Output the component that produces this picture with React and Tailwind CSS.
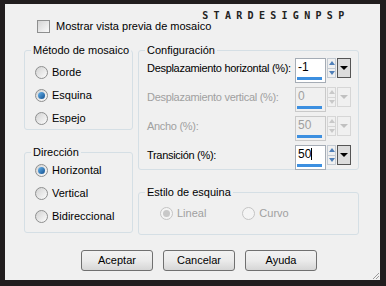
import React from 'react';

const Radio = ({ checked, disabled }) => (
  <span
    className={`relative w-[13px] h-[13px] rounded-full border flex items-center justify-center shrink-0 ${
      disabled ? 'border-[#c4c4c4] bg-[#f4f4f4]' : 'border-[#8e8f8f] bg-gradient-to-br from-[#d2d2d2] to-[#fcfcfc]'
    }`}
  >
    {checked && (
      <span
        className={`w-[7px] h-[7px] rounded-full ${
          disabled ? 'bg-[#c8c8c8]' : 'bg-gradient-to-br from-[#69b6ee] to-[#0f4f8f]'
        }`}
      />
    )}
  </span>
);

const RadioRow = ({ label, checked, disabled }) => (
  <div className="h-[23px] flex items-center gap-[4px]">
    <Radio checked={checked} disabled={disabled} />
    <span className={disabled ? 'text-[#a0a0a0]' : 'text-black'}>{label}</span>
  </div>
);

const Group = ({ title, className, inner, children }) => (
  <fieldset className={`border border-[#d5dfe5] rounded-[3px] ${className}`}>
    <legend className="ml-[6px] px-[2px] leading-[13px] whitespace-nowrap">{title}</legend>
    <div className={inner}>{children}</div>
  </fieldset>
);

const Spin = ({ value, disabled, cursor }) => (
  <div className="flex h-[25px]">
    <div
      className={`w-[31px] h-full border flex flex-col ${
        disabled ? 'border-[#c9c9c9] bg-[#f0f0f0] text-[#a0a0a0]' : 'border-[#a5acb5] bg-white text-black'
      }`}
    >
      <div className="flex-1 pl-[2px] leading-[17px] text-[12px]">
        {value}
        {cursor && <span className="inline-block w-[1px] h-[12px] bg-black align-[-2px]" />}
      </div>
      <div className="h-[3px] w-[25px] ml-[1px] mb-[2px] bg-[#3c8fe0]" />
    </div>
    <div className="w-[9px] h-[20px] flex flex-col ml-[1px]">
      <div className={`flex-1 border flex items-center justify-center ${disabled ? 'border-[#d6d6d6]' : 'border-[#c3cad2]'}`}>
        <span
          className={`w-0 h-0 border-l-[3px] border-r-[3px] border-b-[4px] border-l-transparent border-r-transparent ${
            disabled ? 'border-b-[#c8c8c8]' : 'border-b-[#4f7fb8]'
          }`}
        />
      </div>
      <div className={`flex-1 border border-t-0 flex items-center justify-center ${disabled ? 'border-[#d6d6d6]' : 'border-[#c3cad2]'}`}>
        <span
          className={`w-0 h-0 border-l-[3px] border-r-[3px] border-t-[4px] border-l-transparent border-r-transparent ${
            disabled ? 'border-t-[#c8c8c8]' : 'border-t-[#4f7fb8]'
          }`}
        />
      </div>
    </div>
    <div
      className={`w-[14px] h-[20px] ml-[1px] border flex items-center justify-center ${
        disabled ? 'border-[#d6d6d6] bg-[#f0f0f0]' : 'border-[#555] bg-[#dcdcdc]'
      }`}
    >
      <span
        className={`w-0 h-0 border-l-[4px] border-r-[4px] border-t-[4px] border-l-transparent border-r-transparent ${
          disabled ? 'border-t-[#c0c0c0]' : 'border-t-black'
        }`}
      />
    </div>
  </div>
);

const ConfigRow = ({ label, value, disabled, cursor }) => (
  <div className="h-[29px] flex items-start">
    <span
      className={`w-[148px] pt-[2px] whitespace-nowrap tracking-[-0.3px] ${
        disabled ? 'text-[#a0a0a0]' : 'text-black'
      }`}
    >
      {label}
    </span>
    <Spin value={value} disabled={disabled} cursor={cursor} />
  </div>
);

const Button = ({ children }) => (
  <button className="w-[72px] h-[21px] rounded-[3px] border border-[#707070] bg-gradient-to-b from-[#f2f2f2] via-[#ebebeb] to-[#d6d6d6] text-black leading-none">
    {children}
  </button>
);

export default function App() {
  return (
    <div className="w-[386px] h-[286px] bg-[#211d1e] pt-[4px] pl-[5px] pr-[6px] pb-[6px] font-['Liberation_Sans',Arial,sans-serif] text-[11px]">
      <div className="relative h-full bg-[#f0f0f0] flex flex-col">
        {/* header */}
        <div className="flex items-start h-[40px]">
          <div className="ml-[32px] mt-[14px] flex items-center gap-[6px]">
            <span className="w-[13px] h-[13px] border border-[#8e8f8f] bg-gradient-to-br from-[#d4d4d4] to-[#fafafa]" />
            <span>Mostrar vista previa de mosaico</span>
          </div>
          <div className="ml-[-9px] mt-[4px] font-['DejaVu_Sans_Mono',monospace] text-[10px] font-bold tracking-[5.3px] text-[#222]">
            STARDESIGNPSP
          </div>
        </div>

        {/* body */}
        <div className="flex ml-[19px] gap-[5px]">
          <div className="w-[109px] flex flex-col">
            <Group title="Método de mosaico" className="h-[86px]" inner="pl-[10px] pt-[4px]">
              <RadioRow label="Borde" />
              <RadioRow label="Esquina" checked />
              <RadioRow label="Espejo" />
            </Group>
            <Group title="Dirección" className="mt-[16px] h-[87px]" inner="pl-[10px]">
              <RadioRow label="Horizontal" checked />
              <RadioRow label="Vertical" />
              <RadioRow label="Bidireccional" />
            </Group>
          </div>
          <div className="w-[221px] flex flex-col">
            <Group title="Configuración" className="h-[126px]" inner="pl-[8px] pt-[1px]">
              <ConfigRow label="Desplazamiento horizontal (%):" value="-1" />
              <ConfigRow label="Desplazamiento vertical (%):" value="0" disabled />
              <ConfigRow label="Ancho (%):" value="50" disabled />
              <ConfigRow label="Transición (%):" value="50" cursor />
            </Group>
            <Group title="Estilo de esquina" className="mt-[16px] h-[49px]" inner="pl-[21px] pt-[3px]">
              <div className="flex gap-[36px]">
                <RadioRow label="Lineal" checked disabled />
                <RadioRow label="Curvo" disabled />
              </div>
            </Group>
          </div>
        </div>

        {/* buttons */}
        <div className="flex gap-[10px] ml-[76px] mt-[15px]">
          <Button>Aceptar</Button>
          <Button>Cancelar</Button>
          <Button>Ayuda</Button>
        </div>

        <svg className="absolute right-0 bottom-0" width="9" height="9" viewBox="0 0 9 9">
          <path d="M8 2 L2 8 M8 5 L5 8" stroke="#9a9a9a" strokeWidth="1" />
        </svg>
      </div>
    </div>
  );
}
